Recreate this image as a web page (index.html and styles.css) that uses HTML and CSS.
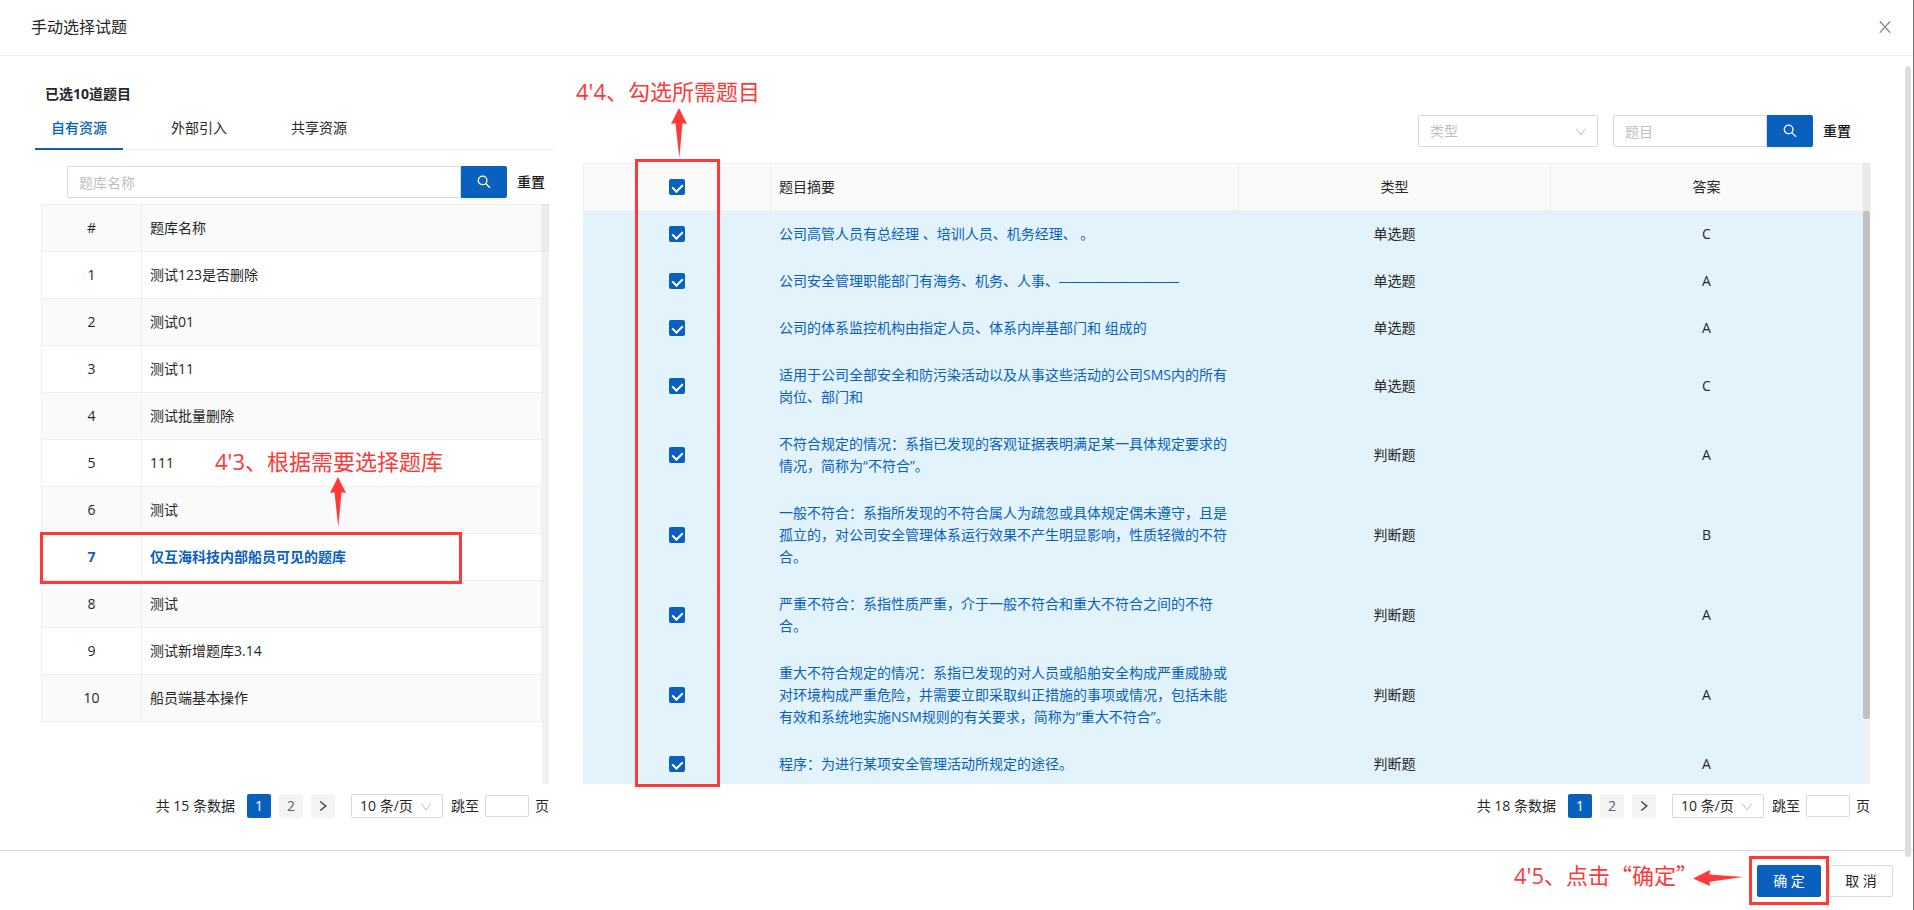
FILE: index.html
```
<!DOCTYPE html>
<html lang="zh-CN">
<head>
<meta charset="utf-8">
<title>手动选择试题</title>
<link rel="stylesheet" href="styles.css">
</head>
<body>
<svg class="sprite" aria-hidden="true">
  <symbol id="i-search" viewBox="0 0 14 14"><circle cx="5.6" cy="5.4" r="4.3"/><path d="M8.8 8.6 13 12.8"/></symbol>
  <symbol id="i-down" viewBox="0 0 12 12"><path d="M1.3 2.5 6 9 10.7 2.5"/></symbol>
  <symbol id="i-next" viewBox="0 0 12 12"><path d="M3.2 1.5 8.8 6 3.2 10.5"/></symbol>
  <symbol id="i-close" viewBox="0 0 12 12"><path d="M.8 .3 11.2 11.7M11.2 .3 .8 11.7"/></symbol>
  <symbol id="i-arrow" viewBox="0 0 16 50"><path d="M8 0 16 16 11.5 15.2 8.3 50 4.5 15.2 0 16Z"/></symbol>
  <symbol id="i-arrow-left" viewBox="0 0 50 16"><path d="M0 8.4 17 0 16.5 4.6 50 7 16.5 11.8 17 16Z"/></symbol>
</svg>
<div class="modal">
  <header class="modal-header">
    <h1 class="modal-title">手动选择试题</h1>
    <button class="close" type="button" aria-label="关闭"><svg class="icon-close"><use href="#i-close"/></svg></button>
  </header>

  <main class="modal-body">
    <section class="panel">
      <h2 class="selected-count">已选10道题目</h2>
      <nav class="tabs">
        <a class="tab active" href="#own">自有资源</a>
        <a class="tab" href="#external">外部引入</a>
        <a class="tab" href="#shared">共享资源</a>
      </nav>
      <form class="search bank-search">
        <input class="field search-input" type="text" placeholder="题库名称" aria-label="题库名称">
        <button class="search-btn" type="button" aria-label="搜索"><svg class="icon-search"><use href="#i-search"/></svg></button>
        <button class="reset" type="button">重置</button>
      </form>
      <div class="table-area bank-area">
        <div class="table-view">
          <table class="table bank-table">
            <thead><tr><th class="index">#</th><th>题库名称</th></tr></thead>
            <tbody>
              <tr><td class="index">1</td><td>测试123是否删除</td></tr>
              <tr><td class="index">2</td><td>测试01</td></tr>
              <tr><td class="index">3</td><td>测试11</td></tr>
              <tr><td class="index">4</td><td>测试批量删除</td></tr>
              <tr><td class="index">5</td><td>111</td></tr>
              <tr><td class="index">6</td><td>测试</td></tr>
              <tr class="current"><td class="index">7</td><td>仅互海科技内部船员可见的题库</td></tr>
              <tr><td class="index">8</td><td>测试</td></tr>
              <tr><td class="index">9</td><td>测试新增题库3.14</td></tr>
              <tr><td class="index">10</td><td>船员端基本操作</td></tr>
            </tbody>
          </table>
        </div>
        <div class="track"><div class="track-head"></div></div>
        <div class="mark-box mark-bank"></div>
        <svg class="mark-arrow arrow-bank"><use href="#i-arrow"/></svg>
        <p class="note note-bank">4'3、根据需要选择题库</p>
      </div>
      <div class="pagination bank-pagination">
        <span class="total">共 15 条数据</span>
        <button class="page on" type="button">1</button>
        <button class="page" type="button">2</button>
        <button class="page next" type="button" aria-label="下一页"><svg class="icon-next"><use href="#i-next"/></svg></button>
        <span class="select-wrap size-wrap"><select class="field page-size" aria-label="每页条数"><option>10 条/页</option></select><svg class="icon-down"><use href="#i-down"/></svg></span>
        <label class="jump">跳至<input class="field jump-input" type="text">页</label>
      </div>
    </section>

    <section class="panel">
      <form class="search question-search">
        <span class="select-wrap type-wrap"><select class="field type-select" aria-label="类型"><option>类型</option></select><svg class="icon-down"><use href="#i-down"/></svg></span>
        <input class="field question-input" type="text" placeholder="题目" aria-label="题目">
        <button class="search-btn" type="button" aria-label="搜索"><svg class="icon-search"><use href="#i-search"/></svg></button>
        <button class="reset" type="button">重置</button>
      </form>
      <div class="table-area">
        <div class="table-view">
          <table class="table question-table">
            <thead><tr><th class="check"><input type="checkbox" class="box" aria-label="全选" checked></th><th class="summary">题目摘要</th><th class="center">类型</th><th class="center">答案</th></tr></thead>
            <tbody>
              <tr><td class="check"><input type="checkbox" class="box" aria-label="选择第1题" checked></td><td class="summary">公司高管人员有总经理 、培训人员、机务经理、 。</td><td class="center">单选题</td><td class="center">C</td></tr>
              <tr><td class="check"><input type="checkbox" class="box" aria-label="选择第2题" checked></td><td class="summary">公司安全管理职能部门有海务、机务、人事、<span class="blank">——————————</span></td><td class="center">单选题</td><td class="center">A</td></tr>
              <tr><td class="check"><input type="checkbox" class="box" aria-label="选择第3题" checked></td><td class="summary">公司的体系监控机构由指定人员、体系内岸基部门和 组成的</td><td class="center">单选题</td><td class="center">A</td></tr>
              <tr><td class="check"><input type="checkbox" class="box" aria-label="选择第4题" checked></td><td class="summary">适用于公司全部安全和防污染活动以及从事这些活动的公司SMS内的所有岗位、部门和</td><td class="center">单选题</td><td class="center">C</td></tr>
              <tr><td class="check"><input type="checkbox" class="box" aria-label="选择第5题" checked></td><td class="summary">不符合规定的情况：系指已发现的客观证据表明满足某一具体规定要求的情况，简称为“不符合”。</td><td class="center">判断题</td><td class="center">A</td></tr>
              <tr><td class="check"><input type="checkbox" class="box" aria-label="选择第6题" checked></td><td class="summary">一般不符合：系指所发现的不符合属人为疏忽或具体规定偶未遵守，且是孤立的，对公司安全管理体系运行效果不产生明显影响，性质轻微的不符合。</td><td class="center">判断题</td><td class="center">B</td></tr>
              <tr><td class="check"><input type="checkbox" class="box" aria-label="选择第7题" checked></td><td class="summary">严重不符合：系指性质严重，介于一般不符合和重大不符合之间的不符合。</td><td class="center">判断题</td><td class="center">A</td></tr>
              <tr><td class="check"><input type="checkbox" class="box" aria-label="选择第8题" checked></td><td class="summary">重大不符合规定的情况：系指已发现的对人员或船舶安全构成严重威胁或对环境构成严重危险，并需要立即采取纠正措施的事项或情况，包括未能有效和系统地实施NSM规则的有关要求，简称为“重大不符合”。</td><td class="center">判断题</td><td class="center">A</td></tr>
              <tr><td class="check"><input type="checkbox" class="box" aria-label="选择第9题" checked></td><td class="summary">程序：为进行某项安全管理活动所规定的途径。</td><td class="center">判断题</td><td class="center">A</td></tr>
            </tbody>
          </table>
        </div>
        <div class="track"><div class="track-head"></div><div class="track-rail"><div class="thumb"></div></div></div>
        <div class="mark-box mark-check"></div>
        <svg class="mark-arrow arrow-check"><use href="#i-arrow"/></svg>
        <p class="note note-check">4'4、勾选所需题目</p>
      </div>
      <div class="pagination">
        <span class="total">共 18 条数据</span>
        <button class="page on" type="button">1</button>
        <button class="page" type="button">2</button>
        <button class="page next" type="button" aria-label="下一页"><svg class="icon-next"><use href="#i-next"/></svg></button>
        <span class="select-wrap size-wrap"><select class="field page-size" aria-label="每页条数"><option>10 条/页</option></select><svg class="icon-down"><use href="#i-down"/></svg></span>
        <label class="jump">跳至<input class="field jump-input" type="text">页</label>
      </div>
    </section>
  </main>

  <footer class="modal-footer">
    <div class="confirm-wrap">
      <button class="btn primary" type="button">确 定</button>
      <div class="mark-box mark-confirm"></div>
      <svg class="arrow-confirm"><use href="#i-arrow-left"/></svg>
      <p class="note note-confirm">4'5、点击<span class="cjk">“确定”</span></p>
    </div>
    <button class="btn" type="button">取 消</button>
  </footer>
  <div class="page-thumb"></div>
</div>
</body>
</html>
```
FILE: styles.css
```
* { box-sizing: border-box; }

body {
  margin: 0;
  font-family: "Open Sans", "Noto Sans CJK SC", sans-serif;
  font-size: 14px;
  line-height: 22px;
  color: #262626;
  background: #fff;
}

button, input, select { font: inherit; color: inherit; margin: 0; }
button { border: 0; padding: 0; background: none; cursor: pointer; }
h1, h2, p { margin: 0; }

.sprite { position: absolute; width: 0; height: 0; }
svg { display: block; fill: none; stroke: currentColor; }
.icon-close { width: 12px; height: 12px; stroke-width: 1.4; }
.icon-search { width: 14px; height: 14px; stroke-width: 1.3; }
.icon-next { width: 12px; height: 12px; stroke-width: 1.4; }
.icon-down {
  position: absolute;
  top: 50%;
  right: 11px;
  width: 12px;
  height: 12px;
  margin-top: -5px;
  color: #bfbfbf;
  pointer-events: none;
}

.modal {
  position: relative;
  display: flex;
  flex-direction: column;
  height: 100vh;
  border-right: 1px solid #707274;
}

.modal-header {
  display: flex;
  align-items: center;
  justify-content: space-between;
  height: 56px;
  padding: 0 22px 2px 31px;
  border-bottom: 1px solid #f0f0f0;
}
.modal-title { font-size: 16px; font-weight: 400; }
.close { color: #8c8c8c; }

.modal-body {
  flex: 1;
  min-height: 0;
  display: grid;
  grid-template-columns: 520px 1fr;
  gap: 28px;
  padding: 26px 43px 32px 35px;
}
.panel { display: flex; flex-direction: column; min-height: 0; min-width: 0; }

.selected-count {
  padding-left: 10px;
  font-size: 14px;
  line-height: 24px;
  font-weight: 700;
}

.tabs { display: flex; gap: 32px; border-bottom: 1px solid #f0f0f0; }
.tab {
  padding: 11px 16px 9px;
  margin-bottom: -1px;
  border-bottom: 2px solid transparent;
  color: inherit;
  text-decoration: none;
}
.tab.active { color: #0960bd; border-color: #0960bd; font-weight: 500; }

.field {
  height: 32px;
  border: 1px solid #d9d9d9;
  border-radius: 2px;
  background: #fff;
  outline: 0;
  appearance: none;
}
.field::placeholder { color: #bfbfbf; }

.search { display: flex; align-items: center; }
.bank-search { margin: 16px 10px 6px 32px; }
.question-search { justify-content: flex-end; margin: 33px 19px 16px 0; }
.search-input { flex: 1; min-width: 0; padding: 0 11px; }
.question-input { width: 154px; padding: 0 11px; }
.search-btn {
  display: grid;
  place-items: center;
  width: 46px;
  height: 32px;
  border-radius: 0 2px 2px 0;
  background: #0960bd;
  color: #fff;
  box-shadow: 0 2px 0 #f3f3f3;
}
.reset { margin-left: 10px; font-weight: 500; color: #1a1a1a; }

.select-wrap { position: relative; display: flex; }
.type-wrap { width: 180px; margin-right: 15px; }
.type-select { width: 100%; padding: 0 11px; color: #bfbfbf; }

.table-area { position: relative; flex: 1; min-height: 0; display: flex; }
.bank-area { margin: 0 6px; }
.table-view { flex: 1; min-width: 0; overflow: hidden; }
.table {
  width: 100%;
  table-layout: fixed;
  border-collapse: separate;
  border-spacing: 0;
  border-top: 1px solid #f0f0f0;
  border-left: 1px solid #f0f0f0;
}
.table th, .table td {
  padding: 12px 8px;
  border-right: 1px solid #f0f0f0;
  border-bottom: 1px solid #f0f0f0;
  font-weight: 400;
  text-align: left;
}
.table th { background: #fafafa; }
.table .index, .table .center, .table .check { text-align: center; }
.table .index { width: 20%; }
.bank-table tbody tr:nth-child(even) { background: #fafafa; }
.table .current td { color: #0960bd; font-weight: 700; }

.table .check { width: 187px; }
.table th.summary, .table td.summary { width: 468px; }
.question-table tbody tr { background: #e2f3fc; }
.question-table td { border-color: #e9f0f4; }
.table td.summary { color: #0960bd; }
.blank { font-family: "Liberation Sans", sans-serif; font-size: 12px; line-height: 1; }

.box {
  appearance: none;
  display: grid;
  place-items: start center;
  width: 16px;
  height: 16px;
  margin: 0 auto;
  padding-top: 3px;
  border-radius: 2px;
  background: #0960bd;
}
.box::after {
  content: "";
  width: 5px;
  height: 8px;
  border: solid #fff;
  border-width: 0 2px 2px 0;
  transform: rotate(45deg);
}

.track { display: flex; flex-direction: column; width: 7px; background: #f1f1f1; }
.track-head {
  height: 48px;
  border: 1px solid #e4e4e4;
  border-left: 0;
  background: #ebebeb;
}
.track-rail { flex: 1; }
.thumb { height: 88.7%; border-radius: 2px; background: #c1c1c1; }

.pagination {
  display: flex;
  align-items: center;
  justify-content: flex-end;
  margin-top: 10px;
  height: 24px;
}
.bank-pagination { margin-right: 6px; }
.total { margin-right: 12px; }
.page {
  display: grid;
  place-items: center;
  width: 24px;
  height: 24px;
  margin-right: 8px;
  border-radius: 2px;
  background: #f4f4f5;
  color: #606266;
}
.page.on { background: #0960bd; color: #fff; }
.page.next { margin-right: 16px; color: #404040; }
.size-wrap { width: 92px; margin-right: 8px; }
.page-size { width: 100%; height: 24px; padding: 0 8px; }
.jump { display: flex; align-items: center; gap: 6px; }
.jump-input { width: 44px; height: 22px; padding: 0 4px; }

.modal-footer {
  display: flex;
  align-items: flex-start;
  justify-content: flex-end;
  gap: 8px;
  height: 60px;
  padding: 14px 20px 0;
  border-top: 1px solid #d9d9d9;
}
.confirm-wrap { position: relative; display: flex; }
.btn {
  width: 64px;
  height: 32px;
  border: 1px solid #d9d9d9;
  border-radius: 2px;
  background: #fff;
}
.btn.primary { border-color: #0960bd; background: #0960bd; color: #fff; }

.page-thumb {
  position: absolute;
  top: 66px;
  right: 2px;
  bottom: 53px;
  width: 6px;
  border-radius: 3px;
  background: #dddee0;
}

.mark-box { position: absolute; border: 3px solid #ff3838; pointer-events: none; }
.mark-bank { left: -1px; top: 328px; width: 422px; height: 52px; }
.mark-check { left: 52px; top: -4px; bottom: -3px; width: 85px; }
.mark-confirm { inset: -9px -8px -8px; }
.mark-arrow, .arrow-confirm { position: absolute; fill: #ff3838; stroke: none; }
.mark-arrow { width: 16px; height: 50px; }
.arrow-bank { left: 289px; top: 273px; }
.arrow-check { left: 88px; top: -55px; }
.arrow-confirm { right: 78px; top: 5px; width: 50px; height: 16px; }
.note {
  position: absolute;
  font-size: 22px;
  line-height: 30px;
  white-space: nowrap;
  color: #ff3838;
}
.note-bank { left: 174px; top: 242px; }
.note-check { left: -7px; top: -87px; }
.note-confirm { right: 123px; top: -6px; }
.cjk { font-family: "Noto Sans CJK SC", sans-serif; }
```
